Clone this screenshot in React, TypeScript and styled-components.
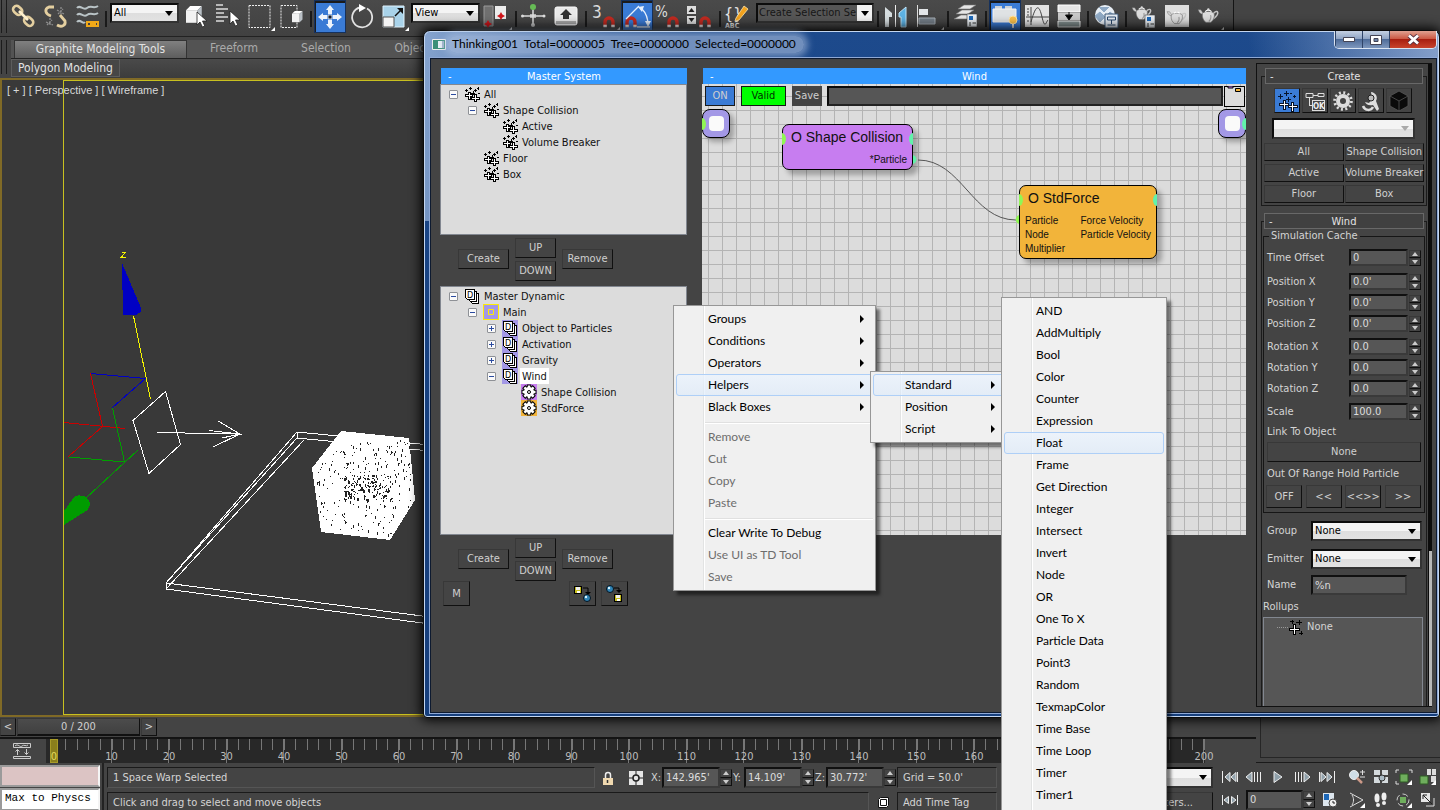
import React from "react";
import styled, { createGlobalStyle, css } from "styled-components";

const UI = `"DejaVu Sans Condensed", Tahoma, "Noto Sans", sans-serif`;
const MENU = `Lato, "Segoe UI", "Noto Sans", sans-serif`;
const NODE = `"Liberation Sans", Arial, sans-serif`;

const Global = createGlobalStyle`
  *, *::before, *::after { box-sizing: border-box; }
  body { margin: 0; background: #444; overflow: hidden; font: 11px/14px ${UI}; color: #d4d4d4; }
  button, input, select { font: inherit; color: inherit; margin: 0; padding: 0; border-radius: 0; min-width: 0; }
  svg { display: block; flex: none; }
`;

const Shell = styled.div`
  position: relative;
  display: flex;
  flex-direction: column;
  min-height: 100vh;
  overflow: hidden;
  background: #444;
`;

/* ---------- shared controls ---------- */

const bevel = css`
  border: 1px solid;
  border-color: #383838 #101010 #101010 #383838;
`;

const PushButton = styled.button<{ $w?: number; $h?: number }>`
  ${bevel}
  width: ${(p) => (p.$w ? `${p.$w}px` : "auto")};
  height: ${(p) => p.$h ?? 20}px;
  background: #444;
  color: #d0d0d0;
  display: flex;
  align-items: center;
  justify-content: center;
  white-space: nowrap;
`;

const TextField = styled.input<{ $w?: number; $h?: number }>`
  width: ${(p) => (p.$w ? `${p.$w}px` : "100%")};
  height: ${(p) => p.$h ?? 17}px;
  padding: 0 2px;
  background: #565656;
  border: 2px solid;
  border-color: #101010 #3a3a3a #3a3a3a #101010;
  color: #dcdcdc;
`;

const ComboFrame = styled.span<{ $w?: number; $h: number }>`
  display: grid;
  align-items: center;
  flex: 0 1 auto;
  min-width: 0;
  width: ${(p) => (p.$w ? `${p.$w}px` : "100%")};
  height: ${(p) => p.$h}px;
  border: 2px solid;
  border-color: #0c0c0c #333 #333 #0c0c0c;
  background: linear-gradient(#f4f4f4 50%, #dedede 52%, #e2e2e2);
  > * { grid-area: 1 / 1; }
  > svg { justify-self: end; margin-right: 4px; pointer-events: none; }
`;

const ComboSelect = styled.select`
  appearance: none;
  width: 100%;
  height: 100%;
  padding-left: 2px;
  border: 0;
  background: transparent;
  color: #000;
`;

function Combo({ label, options, w, h, muted }: { label: string; options: string[]; w?: number; h: number; muted?: boolean }) {
  return (
    <ComboFrame $w={w} $h={h}>
      <ComboSelect aria-label={label}>
        {options.map((o) => <option key={o}>{o}</option>)}
      </ComboSelect>
      <svg width="8" height="5"><path d="M0 0h8L4 5z" fill={muted ? "#aaa" : "#000"} /></svg>
    </ComboFrame>
  );
}

const Arrows = styled.span<{ $h: number }>`
  display: grid;
  grid-template-rows: 1fr 1fr;
  width: 12px;
  height: ${(p) => p.$h}px;
  flex: none;
`;

const ArrowButton = styled.button`
  ${bevel}
  background: #444;
  display: flex;
  align-items: center;
  justify-content: center;
`;

function SpinArrows({ h, name }: { h: number; name: string }) {
  return (
    <Arrows $h={h}>
      <ArrowButton aria-label={`${name} up`}><svg width="6" height="4"><path d="M0 4h6L3 0z" fill="#ccc" /></svg></ArrowButton>
      <ArrowButton aria-label={`${name} down`}><svg width="6" height="4"><path d="M0 0h6L3 4z" fill="#ccc" /></svg></ArrowButton>
    </Arrows>
  );
}

/* ---------- main toolbar ---------- */

const Toolbar = styled.header`
  display: flex;
  width: max-content;
  height: 36px;
  padding-left: 1px;
  padding-right: 8px;
  background: linear-gradient(#4a4a4a, #414141);
  border-right: 1px solid #151515;
`;

const Grip = styled.span<{ $h: number }>`
  width: 6px;
  height: ${(p) => p.$h}px;
  flex: none;
  border: solid #1c1c1c;
  border-width: 0 1px;
`;

const Tool = styled.button<{ $on?: boolean }>`
  width: 32px;
  height: 33px;
  padding: 0;
  border: 0;
  background: none;
  ${(p) => p.$on && css`
    background: #3a7bd5;
    box-shadow: inset 0 0 0 1px #16315c, inset 1px 2px 0 1px #1b1b1b;
  `}
`;

const ToolSep = styled.span`
  width: 2px;
  height: 16px;
  margin: 11px 2px 0;
  background: #1a1a1a;
  flex: none;
`;

const ToolCombo = styled.div<{ $w: number }>`
  width: ${(p) => p.$w}px;
  margin: 3px 1px 0;
`;

const NameSet = styled.div`
  display: flex;
  height: 20px;
  border: 2px solid;
  border-color: #0c0c0c #333 #333 #0c0c0c;
  background: #f2f2f2;
  > input { flex: 1; border: 0; background: #565656; color: #161616; padding-left: 1px; }
  > button { width: 15px; border: 0; background: none; padding: 0 0 0 4px; }
`;

const Magnet = () => (
  <g fill="none">
    <path d="M16 27v-5a4 4 0 0 1 8 0v5" stroke="#c22a20" strokeWidth="3.4" />
    <path d="M14.4 26h3.4M22.3 26h3.4" stroke="#eee" strokeWidth="2.4" />
  </g>
);
const Cursor = ({ x, y }: { x: number; y: number }) => (
  <path transform={`translate(${x} ${y})`} d="M0 0v13l3-3 2.4 5 2.4-1-2.3-5H10z" fill="#fff" stroke="#222" strokeWidth=".8" />
);
const Cube = ({ x, y, s }: { x: number; y: number; s: number }) => (
  <g transform={`translate(${x} ${y}) scale(${s})`}>
    <path d="M0 4h11v12H0z" fill="#f2f2f2" /><path d="M0 4l4-4h11l-4 4z" fill="#fff" /><path d="M11 4l4-4v12l-4 4z" fill="#b9c0c6" />
  </g>
);
const Teapot = ({ x, y, s }: { x: number; y: number; s: number }) => (
  <g transform={`translate(${x} ${y}) scale(${s})`}>
    <path d="M5 7C1 6 1 3 0 2l3 0c2 2 2 4 4 5" fill="#cfcfcf" stroke="#666" strokeWidth=".5" />
    <path d="M17 6c5-5 8 0 0 6" fill="none" stroke="#c4c4c4" strokeWidth="1.7" />
    <path d="M5 6c2-3 11-3 13 0 1 5-2 9-4 10H9C7 15 4 11 5 6z" fill="#dcdcdc" stroke="#666" strokeWidth=".7" />
    <path d="M8 4c2-2 5-2 7 0" fill="none" stroke="#fff" strokeWidth="1.4" /><circle cx="11.5" cy="1.6" r="1.3" fill="#ddd" />
    <path d="M14 8c1 3 0 5-2 7" fill="none" stroke="#999" strokeWidth="1.2" />
  </g>
);
const Corner = () => <path d="M31 27v4h-4z" fill="#fff" />;
const Diamond = ({ x, y }: { x: number; y: number }) => <path transform={`translate(${x} ${y})`} d="M0-4l1.4 2.6L4 0 1.4 1.4 0 4l-1.4-2.6L-4 0l2.6-1.4z" fill="#d2161b" />;
const Card = ({ x, y }: { x: number; y: number }) => (
  <g transform={`translate(${x} ${y})`}>
    <path d="M0 0h10v13H0z" fill="#e8edf2" stroke="#444" strokeWidth=".6" /><path d="M2 2h4v4H2z" fill="#1d68b8" /><path d="M2 9h2M5.500 9H9M2 11h2" stroke="#333" />
  </g>
);

const glyphs: Record<string, React.ReactNode> = {
  link: (
    <g fill="none" stroke="#e4cfa0" strokeWidth="2.600">
      <rect x="6" y="7" width="10" height="7" rx="3.500" transform="rotate(42 11 10)" />
      <rect x="17" y="18" width="10" height="7" rx="3.500" transform="rotate(42 22 21)" />
      <path d="M12 11l9 9" stroke="#fff0cc" />
    </g>
  ),
  unlink: (
    <g fill="none" stroke="#e4cfa0" strokeWidth="2.800">
      <path d="M12 16c-6-2-7-7-2-9l5 0M18 25c5 3 9 0 8-4l-5-6" />
      <path d="M18 10l7 4M19 14l5-5M22 7v7M7 22l7 3M8 25l5-5M11 18v7" stroke="#8e8e8e" strokeWidth="1.300" strokeDasharray="2 1" />
    </g>
  ),
  waves: (
    <g fill="none" stroke="#b9c3c6" strokeWidth="2">
      <path d="M6 8c3-4 6 3 10 0s7 1 11-2M6 15c3-4 6 3 10 0s7 1 11-2M6 22c3-4 6 3 8 0" />
      <path d="M16 22h5v4h-5zM22 22h5v4h-5zM19 24h6" stroke="#f0a818" />
    </g>
  ),
  pick: <g><Cube x={6} y={6} s={1.05} /><Cursor x={17} y={12} /></g>,
  byName: <g><path d="M4 5h7M4 9h12M4 13h8M4 17h12M4 21h8" stroke="#ddd" strokeWidth="1.500" /><Cursor x={18} y={11} /></g>,
  region: <g><rect x="5" y="5.500" width="21" height="22" fill="none" stroke="#eee" strokeDasharray="2 1" /><Corner /></g>,
  crossing: <g><rect x="5" y="5.500" width="16" height="22" fill="none" stroke="#eee" strokeDasharray="2 1" /><Cube x={16} y={11} s={0.7} /></g>,
  move: (
    <g fill="#eef4fb">
      <path d="M16 5l4 5h-2v4h-4v-4h-2zM16 29l4-5h-2v-4h-4v4h-2zM4 17l5-4v2h4v4H9v2zM28 17l-5-4v2h-4v4h4v2z" />
      <path d="M14 15h4v4h-4z" fill="#0e1c33" stroke="#fff" strokeWidth=".8" />
    </g>
  ),
  rotate: <g><path d="M14 7.500a10 10 0 1 0 7 1" fill="none" stroke="#e2e2e2" strokeWidth="1.800" /><path d="M13 4l7 4-7 4z" fill="#fff" /></g>,
  scale: (
    <g>
      <path d="M5 6h21v21H5z" fill="#a9d3ea" stroke="#dff1fb" /><path d="M5 17h11v10H5z" fill="#f4f4f4" stroke="#555" />
      <path d="M17 16l7-7" stroke="#111" strokeWidth="1.500" /><path d="M25 8v6l-6-6z" fill="#111" /><Corner />
    </g>
  ),
  pivot: <g><path d="M3 6h9v20H3z" fill="#707070" stroke="#999" /><path d="M14 6h11v13H14z" fill="#ececec" /><Diamond x={20} y={16} /><Diamond x={7} y={24} /><Corner /></g>,
  manip: <g><path d="M3 16h22M14 7v18" stroke="#ddd" strokeWidth="1.500" /><circle cx="14" cy="7" r="3" fill="#66bb55" /><circle cx="14" cy="25" r="2" fill="#ccc" /><circle cx="3.500" cy="16" r="1.500" fill="#ddd" /><circle cx="25" cy="16" r="1.500" fill="#ddd" /><path d="M11 14h6v4h-6z" fill="#ddd" opacity=".7" /></g>,
  keys: <g><rect x="4" y="7" width="22" height="18" rx="2" fill="#e9e9e9" stroke="#fafafa" /><path d="M5 21h20v3H5z" fill="#aaa" /><path d="M15 9l6 6h-3v4h-6v-4H9z" fill="#333" /></g>,
  snap3: <g><text x="3" y="18" fontSize="17" fill="#ddd">3</text><Magnet /><Corner /></g>,
  angle: <g><g transform="translate(-10 0)"><Magnet /></g><path d="M5 19L18 6M16 27h13M21 9c4 4 6 10 6 16" fill="none" stroke="#e7f1fd" strokeWidth="1.300" /><path d="M17 7l6-1-2 6zM24 21h6l-3 6z" fill="#e7f1fd" /></g>,
  percent: <g><text x="2" y="17" fontSize="15" fill="#ddd">%</text><Magnet /></g>,
  spin: <g><path d="M2 6h9v8H2zM2 16h9v8H2z" fill="#ddd" /><path d="M3.500 12h6L6.500 8zM3.500 18h6L6.500 22z" fill="#222" /><Magnet /></g>,
  sets: <g><text x="1" y="19" fontSize="16" fill="#e5e5e5">{"{}"}</text><text x="2" y="28" fontSize="7" fontWeight="bold" fill="#eee">ABC</text><path d="M13 18l8-12 4 3-9 11-4 1z" fill="#f2a21d" stroke="#fbe3a9" strokeWidth=".8" /></g>,
  mirror: <g><path d="M4 7l7 6v4H8v10H4z" fill="#d6dde0" /><path d="M25 7l-7 6v4h2v10h5z" fill="#5db2e4" stroke="#bfe3f7" /><path d="M14.500 5v22" stroke="#eee" /></g>,
  align: <g><path d="M4.500 5v22" stroke="#ddd" /><path d="M6 9h9v6H6z" fill="#e3e6e8" /><path d="M6 18h16v6H6z" fill="#737d87" stroke="#a7afb6" /><Corner /></g>,
  layers: <g><path d="M3 19l7-4h12l-6 4zM5 14l6-4h12l-6 4zM7 9l6-4h12l-6 4z" fill="#e6e6e6" stroke="#777" strokeWidth=".6" /><Card x={16} y={14} /></g>,
  ribbon: <g><path d="M6 6h7v3H6zM16 6h7v3h-7z" fill="#cfd3d6" /><path d="M4 9h23v13H4z" fill="#dfe2e4" stroke="#f4f4f4" /><circle cx="24" cy="20" r="4" fill="#fbc04b" stroke="#ffe6a8" /><path d="M23 24h2v4h-2z" fill="#eee" /></g>,
  curve: <g><path d="M4 5h24v22H4z" fill="#e2e2e2" /><path d="M10 7v18M5 17h23M6 9h2M6 12h2M6 15h2M6 21h2" stroke="#444" /><path d="M10 22c5-18 8-18 11-5s4 5 6 3" fill="none" stroke="#444" /></g>,
  schematic: <g><path d="M5 5h22v7H5z" fill="#e6e6e6" stroke="#fff" /><path d="M5 21h22v6H5z" fill="#7f8b8b" stroke="#eee" /><path d="M5 13h22v7H5z" fill="#c9c9c9" /><path d="M16 12v4M12.500 15h7L16 20z" stroke="#111" /></g>,
  material: <g><circle cx="14" cy="15" r="10" fill="#e7eef5" /><path d="M8 7l5 5 5-5M4 16l5-4 5 5-5 5zM14 17l5-5 5 4M14 17l0 8" fill="#8fa9c4" stroke="#8fa9c4" /><path d="M14 14h13v14H14z" fill="#e3eaf2" stroke="#3c5878" /><path d="M16.500 17h8v3h-8zM16.500 25h8M20.500 20v4" fill="none" stroke="#27466b" /></g>,
  renderSetup: <g><Teapot x={3} y={6} s={0.85} /><Card x={16} y={15} /></g>,
  frame: <g><path d="M4 5h24v22H4z" fill="#dedede" /><Teapot x={6} y={10} s={0.85} /></g>,
  render: <g><Teapot x={5} y={8} s={0.9} /><Corner /></g>,
};

function ToolIcon({ name, on, label }: { name: string; on?: boolean; label: string }) {
  return (
    <Tool $on={on} aria-label={label} aria-pressed={on}>
      <svg width="32" height="33">{glyphs[name]}</svg>
    </Tool>
  );
}

const MainToolbar = () => (
  <Toolbar>
    <Grip $h={33} />
    <ToolIcon name="link" label="Link" /><ToolIcon name="unlink" label="Unlink" /><ToolIcon name="waves" label="Bind to space warp" />
    <ToolSep />
    <ToolCombo $w={69}><Combo label="Selection filter" options={["All"]} h={20} /></ToolCombo>
    <ToolIcon name="pick" label="Select" /><ToolIcon name="byName" label="Select by name" />
    <ToolIcon name="region" label="Region" /><ToolIcon name="crossing" label="Window or crossing" />
    <ToolSep />
    <ToolIcon name="move" label="Move" on /><ToolIcon name="rotate" label="Rotate" /><ToolIcon name="scale" label="Scale" />
    <ToolCombo $w={69}><Combo label="Coordinate system" options={["View"]} h={20} /></ToolCombo>
    <ToolIcon name="pivot" label="Pivot" />
    <ToolSep />
    <ToolIcon name="manip" label="Manipulate" /><ToolIcon name="keys" label="Keyboard override" />
    <ToolSep />
    <ToolIcon name="snap3" label="Snaps" /><ToolIcon name="angle" label="Angle snap" on />
    <ToolIcon name="percent" label="Percent snap" /><ToolIcon name="spin" label="Spinner snap" />
    <ToolSep />
    <ToolIcon name="sets" label="Edit named sets" />
    <ToolCombo $w={118}>
      <NameSet>
        <input aria-label="Named selection set" defaultValue="Create Selection Se" />
        <button aria-label="Open named sets"><svg width="8" height="5"><path d="M0 0h8L4 5z" /></svg></button>
      </NameSet>
    </ToolCombo>
    <ToolSep />
    <ToolIcon name="mirror" label="Mirror" /><ToolIcon name="align" label="Align" />
    <ToolSep />
    <ToolIcon name="layers" label="Layers" />
    <ToolSep />
    <ToolIcon name="ribbon" label="Toggle ribbon" on /><ToolIcon name="curve" label="Curve editor" /><ToolIcon name="schematic" label="Schematic view" />
    <ToolSep />
    <ToolIcon name="material" label="Material editor" />
    <ToolSep />
    <ToolIcon name="renderSetup" label="Render setup" /><ToolIcon name="frame" label="Rendered frame" /><ToolIcon name="render" label="Render" />
  </Toolbar>
);

/* ---------- ribbon ---------- */

const Ribbon = styled.nav`
  display: flex;
  gap: 4px;
  height: 42px;
  padding: 3px 0 0 1px;
  border-top: 1px solid #222;
  font-size: 12px;
`;
const RibbonBody = styled.div` flex: 1; `;
const TabRow = styled.div`
  display: flex;
  height: 19px;
  padding-left: 3px;
  background: #535353;
  border-bottom: 1px solid #222;
`;
const Tab = styled.button<{ $active?: boolean; $w: number }>`
  width: ${(p) => p.$w}px;
  padding-bottom: 2px;
  border: 0;
  background: none;
  color: #aaa;
  ${(p) => p.$active && css`
    background: linear-gradient(#808080, #5d5d5d);
    border: 1px solid #333;
    border-bottom: 0;
    color: #e2e2e2;
  `}
`;
const PanelRow = styled.div`
  height: 20px;
  background: linear-gradient(#4a4a4a, #3b3b3b);
`;
const PanelTab = styled.button`
  width: 109px;
  height: 18px;
  padding-bottom: 1px;
  border: 1px solid #5c5c5c;
  background: #464646;
  color: #e2e2e2;
`;

/* ---------- viewport ---------- */

const Viewport = styled.main`
  position: relative;
  flex: 1;
  border: 2px solid #806a26;
  background: #393939;
  overflow: hidden;
`;
const ViewLabel = styled.p`
  margin: 3px 0 0 5px;
  color: #d8d8d8;
  font: 11px/14px ${NODE};
`;
const SafeFrame = styled.div`
  position: absolute;
  inset: 0 0 0 61px;
  border: 1px solid #c8c020;
`;
const Scene = styled.svg`
  position: absolute;
  inset: 0;
  width: 100%;
  height: 100%;
`;

const holes = (() => {
  const out: { x: number; y: number; w: number; h: number }[] = [];
  let seed = 77;
  const rnd = () => ((seed = (seed * 16807) % 2147483647) / 2147483647);
  for (let i = 0; i < 420; i++) {
    const spread = i < 130 ? 22 : 50;
    const x = Math.round(366 + (rnd() - 0.5) * spread * 2);
    const y = Math.round(487 + (rnd() - 0.5) * spread * (i < 130 ? 1.1 : 1.9));
    const left = 314 + (y - 468) * 0.13;
    const right = 411 - Math.max(0, y - 502) * 0.6;
    if (y > 434 + (x - 341) * 0.1 && x > left && x + y > 782 && x < right && y < 528 + (x - 321) * 0.1) {
      out.push({ x, y, w: i < 40 ? 2 : 1, h: i % 5 === 0 ? 3 : i % 3 === 0 ? 2 : 1 });
    }
  }
  return out;
})();

const SceneDrawing = () => (
  <Scene aria-label="Wireframe scene">
    <g transform="translate(-2 -80)" fill="none" shapeRendering="crispEdges" strokeWidth="1">
      <path d="M122 263l1 52h13l5-3v-4z" fill="#0000c4" />
      <path d="M133.500 316l17 83" stroke="#f5f500" />
      <path d="M121.500 252h4l-4 5h4" stroke="#f5f500" />
      <path d="M90.500 373.500l55 5-33 29" stroke="#0000c4" />
      <path d="M90.500 373.500l12 53-34 30M64 422.500l61 6" stroke="#cc0000" />
      <path d="M112.500 408l12 54-56-5M138 450l-52 48" stroke="#00a000" />
      <path d="M64 525l22-14c4-3 6-8 1-13-3-3-8-3-12-2l-11 15z" fill="#009c00" />
      <path d="M165.500 391.500l15 53-31.500 29-16-53z" stroke="#fff" />
      <path d="M157 432.500l83 1.500-22-13M240 434l-27 13M209 430.500l31 3.500-18 4" stroke="#fff" />
      <path d="M430 451l-133-13-131 145v6l264 35M430 445l-133-13v6M297 432L166 583l264 34M166 589L304 440" stroke="#fff" />
      <path d="M341 431l68 7 6 62-25 40-69-8-9-64z" fill="#fff" />
      <g fill="#222">{holes.map((h, i) => <rect key={i} x={h.x} y={h.y} width={h.w} height={h.h} />)}</g>
    </g>
  </Scene>
);

/* ---------- time slider and track ---------- */

const Lower = styled.section`
  display: grid;
  grid-template-columns: 1fr 184px;
`;
const SliderRow = styled.div`
  display: flex;
  height: 20px;
  padding: 1px 0 1px;
  > button:nth-child(2) { margin: 0 1px; background: linear-gradient(#4c4c4c, #404040); border-bottom-width: 2px; }
`;
const TrackRow = styled.div`
  display: flex;
  height: 26px;
  border-top: 2px solid #141414;
`;
const TrackIcon = styled.span`
  width: 46px;
  padding: 4px 0 0 13px;
`;
const Track = styled.div`
  display: flex;
  flex: 1;
  margin-right: 51px;
  padding-left: 7px;
  background: #282828;
  color: #bdbdbd;
`;
const Decade = styled.div`
  flex: 1;
  min-width: 0;
  border-left: 1px solid #777;
  &:last-child { flex: 0 0 2px; }
`;
const Ticks = styled.div`
  height: 11px;
  background: repeating-linear-gradient(90deg, #777 0 1px, transparent 1px 20%);
`;
const FrameNo = styled.span<{ $now?: boolean }>`
  display: block;
  width: 30px;
  margin-left: -15px;
  line-height: 13px;
  text-align: center;
  ${(p) => p.$now && css`
    width: 8px;
    height: 24px;
    margin: -11px 0 0 -4px;
    padding-top: 11px;
    background: #8a7f1c;
    color: #e0d85a;
    box-shadow: inset 0 0 0 1px #a89b28;
  `}
`;
const SidePanelTail = styled.div`
  height: 41px;
  margin-left: 4px;
  border: 1px solid #262626;
  border-width: 0 0 1px 1px;
`;
const SideCell = styled.div` border-bottom: 1px solid #1a1a1a; `;

/* ---------- status bar ---------- */

const Status = styled.footer`
  display: grid;
  grid-template-columns: 100px 1fr 227px;
  height: 47px;
`;
const Listener = styled.div`
  display: grid;
  grid-template-rows: 22px 23px;
  row-gap: 1px;
  padding-top: 2px;
`;
const ListenerInput = styled.input<{ $pink?: boolean }>`
  width: 100%;
  border: 2px solid #9a9a9a;
  border-right-color: #f4f4f4;
  background: ${(p) => (p.$pink ? "#dcc4c4" : "#fff")};
  color: #000;
  padding: 0 3px 3px;
  font: 11px "Liberation Mono", monospace;
`;
const StatusRows = styled.div`
  display: flex;
  flex-direction: column;
  gap: 4px;
  padding: 4px 0 0 3px;
  margin-left: 2px;
  border-left: 2px solid #222;
`;
const StatusRow = styled.div`
  display: flex;
  height: 21px;
  align-items: center;
`;
const Well = styled.span<{ $w?: number }>`
  display: flex;
  align-items: center;
  flex: ${(p) => (p.$w ? `0 0 ${p.$w}px` : "1")};
  height: 21px;
  padding-left: 5px;
  border: 1px solid;
  border-color: #1a1a1a #555 #555 #1a1a1a;
`;
const IconCell = styled.button<{ $w: number }>`
  width: ${(p) => p.$w}px;
  height: 21px;
  display: flex;
  flex: none;
  align-items: center;
  justify-content: center;
  border: 0;
  background: none;
`;
const Coord = styled.label`
  display: flex;
  align-items: center;
  width: 82px;
  flex: none;
  > span:first-child { width: 11px; }
`;
const Pad = styled.span<{ $w: number }>` flex: 0 0 ${(p) => p.$w}px; `;
const PlayRows = styled.div`
  display: flex;
  flex-direction: column;
  gap: 2px;
  padding: 3px 0 0 5px;
`;

const Bars = ({ d }: { d: string }) => (
  <svg width="18" height="14"><path d={d} fill="#8fa0aa" stroke="#eee" strokeWidth="1" /></svg>
);

/* ---------- floating window ---------- */

const FloatWindow = styled.section`
  position: absolute;
  top: 30px;
  right: 0;
  bottom: 92px;
  left: 423px;
  display: flex;
  flex-direction: column;
  padding: 0 2px 4px 6px;
  border: 1px solid #0b0b0b;
  border-radius: 7px 7px 4px 4px;
  background:
    linear-gradient(100deg, rgba(170, 195, 230, .75), rgba(120, 155, 205, .2) 180px, transparent 260px) 0 0 / 500px 190px no-repeat,
    linear-gradient(260deg, rgba(170, 190, 225, .75), transparent 190px) 100% 0 / 300px 190px no-repeat,
    linear-gradient(#1d4a8c, #163f7d 60%);
  box-shadow: inset 0 0 0 1px #c3d6f0, 0 0 12px 2px #000;
`;
const TitleBar = styled.div`
  display: flex;
  align-items: center;
  flex: none;
  height: 27px;
  padding-left: 2px;
  gap: 2px;
`;
const TitleText = styled.h1`
  margin: 0;
  padding: 1px 8px 2px 4px;
  border-radius: 9px;
  background: rgba(170, 190, 222, .6);
  box-shadow: 0 0 7px 4px rgba(170, 190, 222, .6);
  color: #000;
  font: 12px/14px ${MENU};
  white-space: pre;
`;
const Caption = styled.div`
  display: flex;
  align-self: flex-start;
  margin-left: auto;
  border: 1px solid #dbe5f3;
  border-top: 0;
  border-radius: 0 0 5px 5px;
  overflow: hidden;
`;
const CaptionButton = styled.button<{ $close?: boolean }>`
  width: ${(p) => (p.$close ? 47 : 27)}px;
  height: 17px;
  display: flex;
  align-items: center;
  justify-content: center;
  border: 0;
  border-left: 1px solid #2f4468;
  background: ${(p) => (p.$close ? "linear-gradient(#e0a191, #cc5a45 45%, #a81f10 50%, #c8432c)" : "linear-gradient(#c4d0e2, #8fa4c4 45%, #4f6c99 50%, #7e97bd)")};
`;
const Client = styled.div`
  display: flex;
  flex: 1;
  padding: 4px 4px 5px 9px;
  border: 1px solid #0d1a30;
  outline: 1px solid #8fa9d6;
  background: #444;
`;
const LeftCol = styled.div`
  flex: 0 0 247px;
  padding-top: 5px;
`;
const MidCol = styled.div`
  flex: 1;
  margin: 0 10px 0 15px;
  padding-top: 5px;
  min-width: 0;
`;
const BlueHead = styled.h2`
  position: relative;
  height: 16px;
  margin: 0 0 0 1px;
  background: #3399ff;
  color: #fff;
  font: 11px/18px ${UI};
  text-align: center;
  &::before { content: "-"; position: absolute; left: 7px; }
`;
const TreeBox = styled.ul<{ $h: number }>`
  height: ${(p) => p.$h}px;
  margin: 0;
  padding: 1px 0 0 8px;
  border: 1px solid #828790;
  background: #dcdcdc;
  color: #111;
  list-style: none;
`;
const TreeRow = styled.li<{ $level: number }>`
  display: flex;
  align-items: center;
  height: 16px;
  padding-left: ${(p) => p.$level * 19}px;
`;
const Expander = styled.button`
  width: 9px;
  height: 9px;
  border: 1px solid #8e9196;
  border-radius: 1px;
  background: #fafafa;
  display: flex;
  align-items: center;
  justify-content: center;
`;
const NoExpander = styled.span` width: 9px; `;
const NodeIcon = styled.span<{ $tone?: string }>`
  width: 16px;
  height: 16px;
  margin: 0 2px 0 6px;
  background: ${(p) => p.$tone ?? "transparent"};
`;
const NodeText = styled.span<{ $sel?: boolean }>`
  height: 16px;
  padding: 0 2px;
  line-height: 18px;
  white-space: nowrap;
  background: ${(p) => (p.$sel ? "#fff" : "transparent")};
`;

const ParticleIcon = () => (
  <svg width="16" height="16" shapeRendering="crispEdges" fill="none">
    <path d="M5 2.500h3M6.500 1v3M10 4.500h3M11.500 3v3M1 4.500h3M2.500 3v3M13 2.500h2M14 1v3M7 7.500h4M9.500 5v4M14 7.500h2" stroke="#000" />
    <path d="M1 9.500h8M5 6v8M7 12.500h9M11.500 8v8" stroke="#000" strokeWidth="3" />
    <path d="M2 9.500h6M5 7v6M8 12.500h7M11.500 9v6" stroke="#fff" />
  </svg>
);
const StackIcon = () => (
  <svg width="16" height="16" fill="#fff" stroke="#000" shapeRendering="crispEdges">
    <path d="M6.500 5.500h8v10h-6l-2-2z" /><path d="M4.500 3.500h8v10h-6l-2-2z" /><path d="M1.500 1.500h9v10h-7l-2-2z" />
    <text x="3" y="10" fontSize="9" fontFamily="DejaVu Sans Condensed" stroke="none" fill="#000">D</text>
  </svg>
);
const TEETH = [0, 45, 90, 135];
const GearIcon = () => (
  <svg width="16" height="16">
    <g transform="translate(8 8)">
      {TEETH.map((a) => <path key={a} transform={`rotate(${a})`} d="M-7.500 0h15" stroke="#000" strokeWidth="4.500" />)}
      <circle r="6" />
      {TEETH.map((a) => <path key={a} transform={`rotate(${a})`} d="M-6.500 0h13" stroke="#fff" strokeWidth="2.500" />)}
      <circle r="5" fill="#fff" /><circle r="1.500" fill="none" stroke="#000" />
    </g>
  </svg>
);
const MainIcon = () => (
  <svg width="16" height="16" fill="none" stroke="#ffee00"><path d="M.5.5h15v15H.5zM5.500 5.500h5v5h-5z" /></svg>
);

type Kind = "particle" | "stack" | "gear" | "main";
type Entry = { level: number; text: string; kind: Kind; tone?: string; open?: boolean; sel?: boolean };
const pictures: Record<Kind, React.ReactNode> = { particle: <ParticleIcon />, stack: <StackIcon />, gear: <GearIcon />, main: <MainIcon /> };

const systemTree: Entry[] = [
  { level: 0, text: "All", kind: "particle", open: true },
  { level: 1, text: "Shape Collision", kind: "particle", open: true },
  { level: 2, text: "Active", kind: "particle" },
  { level: 2, text: "Volume Breaker", kind: "particle" },
  { level: 1, text: "Floor", kind: "particle" },
  { level: 1, text: "Box", kind: "particle" },
];
const lilac = "#a398e6";
const dynamicTree: Entry[] = [
  { level: 0, text: "Master Dynamic", kind: "stack", open: true },
  { level: 1, text: "Main", kind: "main", tone: lilac, open: true },
  { level: 2, text: "Object to Particles", kind: "stack", tone: lilac, open: false },
  { level: 2, text: "Activation", kind: "stack", tone: lilac, open: false },
  { level: 2, text: "Gravity", kind: "stack", tone: lilac, open: false },
  { level: 2, text: "Wind", kind: "stack", tone: lilac, open: true, sel: true },
  { level: 3, text: "Shape Collision", kind: "gear", tone: "#c77df0" },
  { level: 3, text: "StdForce", kind: "gear", tone: "#f2b43a" },
];

function Tree({ rows, h }: { rows: Entry[]; h: number }) {
  return (
    <TreeBox $h={h}>
      {rows.map((r, i) => (
        <TreeRow key={i} $level={r.level}>
          {r.open === undefined ? <NoExpander /> : (
            <Expander aria-label={`Toggle ${r.text}`}>
              <svg width="5" height="5" stroke="#2b4ba0"><path d={r.open ? "M0 2.500h5" : "M0 2.500h5M2.500 0v5"} /></svg>
            </Expander>
          )}
          <NodeIcon $tone={r.tone}>{pictures[r.kind]}</NodeIcon>
          <NodeText $sel={r.sel}>{r.text}</NodeText>
        </TreeRow>
      ))}
    </TreeBox>
  );
}

const TreeButtons = styled.div`
  display: flex;
  align-items: center;
  gap: 6px;
  height: 51px;
  padding: 0 0 3px 18px;
`;
const UpDown = styled.div` display: grid; gap: 3px; `;
const ManageButtons = () => (
  <TreeButtons>
    <PushButton $w={51}>Create</PushButton>
    <UpDown><PushButton $w={41}>UP</PushButton><PushButton $w={41}>DOWN</PushButton></UpDown>
    <PushButton $w={51}>Remove</PushButton>
  </TreeButtons>
);
const ToolsLine = styled.div`
  display: flex;
  gap: 5px;
  padding-left: 3px;
  margin-top: -5px;
  > :nth-child(2) { margin-left: 94px; }
`;
const Disk = () => (
  <g shapeRendering="crispEdges"><path d="M0 0h8v8H0z" fill="#000" /><path d="M1 1h6v6H1z" fill="#c8c020" /><path d="M2 1h4v3H2z" fill="#eee" /><path d="M3 5h3v2H3z" fill="#fff" /></g>
);
const Globe = () => <g><circle r="3.500" fill="#2e83b5" stroke="#04121d" /><circle cx="-1" cy="-1" r="1.200" fill="#d9f4ff" /></g>;

/* ---------- node canvas ---------- */

const Canvas = styled.div`
  position: relative;
  height: 451px;
  overflow: hidden;
  background:
    linear-gradient(#b4b4b4 1px, transparent 1px) 0 12px / 14px 14px,
    linear-gradient(90deg, #b4b4b4 1px, transparent 1px) 6px 0 / 14px 14px,
    #dcdcdc;
`;
const CanvasBar = styled.div`
  position: relative;
  display: flex;
  align-items: flex-start;
  padding: 2px 1px 0 3px;
  > input { flex: 1; background: #565656; height: 20px; border: 2px solid; border-color: #0a0a0a #222 #222 #0a0a0a; }
`;
const CanvasButton = styled.button<{ $w: number; $tone?: "on" | "valid"; $mr: number }>`
  width: ${(p) => p.$w}px;
  height: 20px;
  margin-right: ${(p) => p.$mr}px;
  border: 0;
  background: #444;
  color: #cfcfcf;
  ${(p) => p.$tone === "on" && css` background: #3a7bd5; border: 1px solid #1a1a1a; `}
  ${(p) => p.$tone === "valid" && css` background: #00ff00; border: 1px solid #151515; color: #003000; `}
`;
const MiniMap = styled.button`
  width: 21px;
  height: 21px;
  margin-left: 1px;
  border: 1px solid #000;
  background: #dcdcdc;
  > svg { margin-top: -2px; }
`;
const Wire = styled.svg`
  position: absolute;
  inset: 0;
  width: 100%;
  height: 100%;
`;
const EndNode = styled.div<{ $right?: boolean }>`
  position: absolute;
  top: 25px;
  ${(p) => (p.$right ? "right: 0;" : "left: 0;")}
  width: 28px;
  height: 29px;
  display: grid;
  place-items: center;
  border: 1px solid #000;
  border-radius: 8px;
  background: #a398e6;
  box-shadow: 4px 4px 5px rgba(0, 0, 0, .28);
  &::before { content: ""; width: 15px; height: 15px; border-radius: 4px; background: #fafafa; }
`;
const Port = styled.i<{ $side: "left" | "right"; $y: number }>`
  position: absolute;
  top: ${(p) => p.$y}px;
  ${(p) => p.$side}: -1px;
  width: 4px;
  height: 12px;
  background: ${(p) => (p.$side === "left" ? "#90f755" : "#62f2aa")};
  border-radius: ${(p) => (p.$side === "left" ? "0 4px 4px 0 / 0 6px 6px 0" : "4px 0 0 4px / 6px 0 0 6px")};
`;
const GraphNode = styled.article<{ $x: number; $y: number; $w: number; $h: number; $tone: string }>`
  position: absolute;
  left: ${(p) => p.$x}px;
  top: ${(p) => p.$y}px;
  width: ${(p) => p.$w}px;
  height: ${(p) => p.$h}px;
  border: 1px solid #000;
  border-radius: 7px;
  background: ${(p) => p.$tone};
  box-shadow: 5px 5px 5px rgba(0, 0, 0, .28);
  color: #111;
  font: 10px/14px ${NODE};
`;
const NodeTitle = styled.h3`
  margin: 3px 8px 7px;
  font: 14px/18px ${NODE};
  white-space: nowrap;
`;
const Pins = styled.div<{ $end?: boolean }>`
  display: flex;
  justify-content: ${(p) => (p.$end ? "flex-end" : "space-between")};
  padding: 0 5px;
`;
const PinList = styled.ul` margin: 0; padding: 0; list-style: none; white-space: nowrap; `;

/* ---------- rollout panel ---------- */

const SidePanel = styled.aside`
  display: flex;
  flex: 0 0 176px;
  border: 1px solid #111;
  border-right: 0;
`;
const RollColumn = styled.div`
  display: flex;
  flex-direction: column;
  flex: 1;
  min-width: 0;
  padding: 12px 1px 0 4px;
`;
const ScrollTrack = styled.div`
  width: 4px;
  background: #0c0c0c;
  display: flex;
  flex-direction: column;
  justify-content: flex-end;
  &::after { content: ""; height: 155px; margin-left: 1px; background: #b8b8b8; }
`;
const Rollout = styled.section<{ $fill?: boolean }>`
  display: flex;
  flex-direction: column;
  border: 1px solid #1b1b1b;
  padding: 0 2px 2px;
  ${(p) => p.$fill && css` flex: 1; margin-top: 15px; border-bottom: 0; padding: 0 1px; `}
`;
const RollHead = styled.h2`
  position: relative;
  flex: none;
  height: 16px;
  margin: -9px 1px 0;
  border: 1px solid #686868;
  background: #404040;
  color: #e4e4e4;
  font: 11px/16px ${UI};
  text-align: center;
  &::before { content: "-"; position: absolute; left: 4px; }
`;
const TypeRow = styled.div`
  display: flex;
  gap: 2px;
  padding: 4px 0 5px 10px;
`;
const TypeButton = styled.button<{ $on?: boolean }>`
  ${bevel}
  width: 26px;
  height: 25px;
  background: ${(p) => (p.$on ? "#3a7bd5" : "#444")};
  display: flex;
  align-items: center;
  justify-content: center;
`;
const ComboSlot = styled.div` padding: 0 9px 4px 8px; `;
const PickGrid = styled.div`
  display: grid;
  grid-template-columns: 1fr 1fr;
  gap: 3px 1px;
`;
const Cache = styled.fieldset`
  margin: 0 0 8px;
  padding: 4px 3px 4px 3px;
  border: 1px solid #161616;
  min-width: 0;
  > legend { padding: 0 2px; margin-left: 2px; line-height: 14px; }
`;
const SpinRow = styled.label<{ $gap: number }>`
  display: flex;
  align-items: center;
  height: 21px;
  margin-top: ${(p) => p.$gap}px;
  > span:first-child { flex: 1; }
  > input { margin-right: 1px; }
`;
const Note = styled.p<{ $h: number }>`
  margin: 0;
  line-height: ${(p) => p.$h}px;
  white-space: nowrap;
`;
const RangeRow = styled.div`
  display: flex;
  justify-content: space-between;
  margin-left: -1px;
`;
const FormRow = styled.label`
  display: flex;
  align-items: center;
  height: 20px;
  margin: 0 3px 8px 4px;
  > span:first-child { flex: 0 0 44px; }
  &:last-of-type { margin-top: -2px; margin-bottom: 2px; }
`;
const RollupTree = styled.ul`
  flex: 1;
  margin: 0 2px 0 0;
  padding: 1px 0 0 13px;
  border: 1px solid #828790;
  border-bottom: 0;
  background: #565656;
  list-style: none;
  > li { display: flex; align-items: center; height: 16px; }
  > li > svg { margin-right: 3px; }
`;

const OkIcon = () => (
  <svg width="22" height="22" fill="none" stroke="#ddd"><path d="M2 3.500h7v4H2zM14 3.500h6v3h-6zM9 5.500h5M5.500 8v8M5.500 15.500h4" /><rect x="8.500" y="10.500" width="12" height="10" /><text x="9" y="19" fontSize="8" fontWeight="bold" fill="#eee" stroke="none">OK</text></svg>
);
const PlusField = () => (
  <svg width="22" height="22" fill="none" shapeRendering="crispEdges">
    <path d="M8 3.500h5M10.500 1v5M2 6.500h5M4.500 4v5M10 9.500h5M12.500 7v5M17 6.500h3M18.500 5v3M14 3.500h2" stroke="#07142a" />
    <path d="M3 14.500h10M8.500 10v10M12 16.500h10M16.500 12v10" stroke="#07142a" strokeWidth="3" />
    <path d="M4 14.500h8M8.500 11v8M13 16.500h8M16.500 13v8" stroke="#fff" strokeWidth="1.500" />
  </svg>
);
const BigGear = () => (
  <svg width="22" height="22" fill="none"><circle cx="11" cy="11" r="5" stroke="#ddd" strokeWidth="4" /><circle cx="11" cy="11" r="8.400" stroke="#ddd" strokeWidth="2.800" strokeDasharray="2 2.400" /></svg>
);
const Wrench = () => (
  <svg width="22" height="22"><path d="M11 2a6 6 0 0 1 5 9l3 8-2 2-4-6c-5 1-7-1-8-3l4 1 3-4z" fill="#ddd" /><circle cx="11" cy="8" r="3" fill="#bbb" stroke="#222" /><path d="M3 16c2 5 8 5 10 1" fill="none" stroke="#ddd" strokeWidth="2.500" /></svg>
);
const BlackCube = () => (
  <svg width="24" height="22" stroke="#555" strokeWidth=".8"><path d="M12 1l9 5v10l-9 5-9-5V6z" fill="#0a0a0a" /><path d="M3 6l9 5 9-5M12 11v10" fill="none" /></svg>
);

type SpinGroup = { gap: number; fields: [string, string][] };
const spinGroups: SpinGroup[] = [
  { gap: 0, fields: [["Time Offset", "0"]] },
  { gap: 3, fields: [["Position X", "0.0'"], ["Position Y", "0.0'"], ["Position Z", "0.0'"]] },
  { gap: 2, fields: [["Rotation X", "0.0"], ["Rotation Y", "0.0"], ["Rotation Z", "0.0"]] },
  { gap: 2, fields: [["Scale", "100.0"]] },
];

const Parameters = () => (
  <SidePanel>
    <RollColumn>
      <Rollout>
        <RollHead>Create</RollHead>
        <TypeRow>
          <TypeButton $on aria-label="Particles"><PlusField /></TypeButton>
          <TypeButton aria-label="Rules"><OkIcon /></TypeButton>
          <TypeButton aria-label="Settings"><BigGear /></TypeButton>
          <TypeButton aria-label="Utilities"><Wrench /></TypeButton>
          <TypeButton aria-label="Black boxes"><BlackCube /></TypeButton>
        </TypeRow>
        <ComboSlot><Combo label="Category" options={[""]} h={21} muted /></ComboSlot>
        <PickGrid>
          {["All", "Shape Collision", "Active", "Volume Breaker", "Floor", "Box"].map((t) => <PushButton key={t} $h={18}>{t}</PushButton>)}
        </PickGrid>
      </Rollout>
      <Rollout $fill>
        <RollHead>Wind</RollHead>
        <Cache>
          <legend>Simulation Cache</legend>
          {spinGroups.map((g) => g.fields.map(([name, value], i) => (
            <SpinRow key={name} $gap={i === 0 ? g.gap : 0}>
              <span>{name}</span>
              <TextField $w={59} $h={17} defaultValue={value} />
              <SpinArrows h={16} name={name} />
            </SpinRow>
          )))}
          <Note $h={20}>Link To Object</Note>
          <PushButton $w={154}>None</PushButton>
          <Note $h={23}>Out Of Range Hold Particle</Note>
          <RangeRow>
            {["OFF", "<<", "<<>>", ">>"].map((t) => <PushButton key={t} $w={36} $h={23}>{t}</PushButton>)}
          </RangeRow>
        </Cache>
        <FormRow><span>Group</span><Combo label="Group" options={["None"]} h={20} /></FormRow>
        <FormRow><span>Emitter</span><Combo label="Emitter" options={["None"]} h={20} /></FormRow>
        <FormRow><span>Name</span><TextField $w={96} $h={20} defaultValue="%n" /></FormRow>
        <Note $h={20}>Rollups</Note>
        <RollupTree>
          <li>
            <svg width="27" height="16" fill="none" shapeRendering="crispEdges">
              <path d="M0 8.500h12" stroke="#999" strokeDasharray="1 1" />
              <path d="M13 2.500h4M15.500 1v4M19 3.500h6M22.500 1v5M22 14.500h4M24.500 12v4M12 10.500h11M17.500 5v11" stroke="#000" />
              <path d="M12 10.500h11M17.500 5v11" stroke="#000" strokeWidth="3" /><path d="M13 10.500h9M17.500 6v9" stroke="#fff" />
            </svg>
            None
          </li>
        </RollupTree>
      </Rollout>
    </RollColumn>
    <ScrollTrack />
  </SidePanel>
);

/* ---------- context menus ---------- */

const MenuBox = styled.ul<{ $x: number; $y: number; $w: number; $open?: boolean }>`
  position: absolute;
  left: ${(p) => p.$x}px;
  top: ${(p) => p.$y}px;
  ${(p) => p.$open && "bottom: 0;"}
  width: ${(p) => p.$w}px;
  margin: 0;
  padding: 2px;
  border: 1px solid #979797;
  ${(p) => p.$open && "border-bottom: 0;"}
  background: linear-gradient(90deg, transparent 29px, #e2e3e3 29px 30px, #fff 30px 31px, transparent 31px), #f0f0f0;
  box-shadow: 4px 4px 3px rgba(0, 0, 0, .5);
  color: #000;
  font: 12px/20px ${MENU};
  list-style: none;
`;
const MenuItem = styled.button<{ $hot?: boolean; $off?: boolean }>`
  display: flex;
  align-items: center;
  justify-content: space-between;
  width: 100%;
  height: 22px;
  padding: 0 8px 0 31px;
  border: 1px solid transparent;
  border-radius: 3px;
  background: none;
  color: ${(p) => (p.$off ? "#6d6d6d" : "#000")};
  ${(p) => p.$hot && css` border-color: #aecff7; background: linear-gradient(rgba(235, 243, 253, .8), rgba(219, 234, 251, .6)); `}
`;
const MenuRule = styled.li`
  height: 8px;
  margin-left: 29px;
  padding-top: 4px;
  &::before { content: ""; display: block; height: 2px; background: #e0e0e0; border-bottom: 1px solid #fff; }
`;

type Item = { text: string; sub?: boolean; hot?: boolean; off?: boolean } | null;
function Menu({ x, y, w, items, open }: { x: number; y: number; w: number; items: Item[]; open?: boolean }) {
  return (
    <MenuBox $x={x} $y={y} $w={w} $open={open}>
      {items.map((it, i) => it ? (
        <li key={i}>
          <MenuItem $hot={it.hot} $off={it.off}>
            {it.text}
            {it.sub && <svg width="4" height="8"><path d="M0 0l4 4-4 4z" /></svg>}
          </MenuItem>
        </li>
      ) : <MenuRule key={i} />)}
    </MenuBox>
  );
}

const rootMenu: Item[] = [
  { text: "Groups", sub: true }, { text: "Conditions", sub: true }, { text: "Operators", sub: true },
  { text: "Helpers", sub: true, hot: true }, { text: "Black Boxes", sub: true }, null,
  { text: "Remove", off: true }, { text: "Cut", off: true }, { text: "Copy", off: true }, { text: "Paste", off: true }, null,
  { text: "Clear Write To Debug" }, { text: "Use UI as TD Tool", off: true }, { text: "Save", off: true },
];
const helperMenu: Item[] = [{ text: "Standard", sub: true, hot: true }, { text: "Position", sub: true }, { text: "Script", sub: true }];
const standardMenu: Item[] = [
  "AND", "AddMultiply", "Bool", "Color", "Counter", "Expression", "Float", "Frame", "Get Direction", "Integer", "Intersect",
  "Invert", "Node", "OR", "One To X", "Particle Data", "Point3", "Random", "TexmapColor", "Time Base", "Time Loop", "Timer", "Timer1",
].map((text) => ({ text, hot: text === "Float" }));

/* ---------- assembled pieces ---------- */

const ThinkingWindow = () => (
  <FloatWindow>
    <TitleBar>
      <svg width="14" height="13"><path d="M.5 1.500h13v10H.5z" fill="#3c8f78" stroke="#eee" /><path d="M6 3h4v7H6z" fill="#e8eef4" /><path d="M10 3h2v7h-2z" fill="#9fb2c8" /></svg>
      <TitleText>{"Thinking001  Total=0000005  Tree=0000000  Selected=0000000"}</TitleText>
      <Caption>
        <CaptionButton aria-label="Minimize"><svg width="12" height="5"><path d="M.5.5h11v4H.5z" fill="#fff" stroke="#445" /></svg></CaptionButton>
        <CaptionButton aria-label="Maximize"><svg width="12" height="10"><path d="M.5.5h11v9H.5z" fill="#fff" stroke="#445" /><path d="M4 3.500h4v3H4z" fill="#6a82a8" stroke="#445" /></svg></CaptionButton>
        <CaptionButton $close aria-label="Close"><svg width="13" height="11"><path d="M2 1.500l9 8M11 1.500l-9 8" stroke="#534" strokeWidth="4.500" /><path d="M2 1.500l9 8M11 1.500l-9 8" stroke="#fff" strokeWidth="2.800" /></svg></CaptionButton>
      </Caption>
    </TitleBar>
    <Client>
      <LeftCol>
        <BlueHead>Master System</BlueHead>
        <Tree rows={systemTree} h={151} />
        <ManageButtons />
        <Tree rows={dynamicTree} h={249} />
        <ManageButtons />
        <ToolsLine>
          <PushButton $w={27} $h={25}>M</PushButton>
          <PushButton $w={27} $h={25} aria-label="Load">
            <svg width="20" height="18"><g transform="translate(1 1)"><Disk /></g><path d="M10 3h5v5" fill="none" stroke="#000" /><path d="M12 7h6l-3 3z" /><g transform="translate(14 13)"><Globe /></g></svg>
          </PushButton>
          <PushButton $w={27} $h={25} aria-label="Save to disk">
            <svg width="20" height="18"><g transform="translate(5 4)"><Globe /></g><path d="M9 3h5v3" fill="none" stroke="#000" /><path d="M11 5h6l-3 3z" /><g transform="translate(9 9)"><Disk /></g></svg>
          </PushButton>
        </ToolsLine>
      </LeftCol>
      <MidCol>
        <BlueHead>Wind</BlueHead>
        <Canvas>
          <CanvasBar>
            <CanvasButton $w={30} $mr={6} $tone="on">ON</CanvasButton>
            <CanvasButton $w={45} $mr={6} $tone="valid">Valid</CanvasButton>
            <CanvasButton $w={30} $mr={5}>Save</CanvasButton>
            <input aria-label="Comment" />
            <MiniMap aria-label="Overview">
              <svg width="19" height="19" stroke="#000"><path d="M3 0h5v2H3z" fill="#c77df0" /><path d="M10.500 2.500h5v3h-5z" fill="#f2b43a" /></svg>
            </MiniMap>
          </CanvasBar>
          <EndNode><Port $side="left" $y={8} /></EndNode>
          <EndNode $right><Port $side="right" $y={8} /></EndNode>
          <GraphNode $x={80} $y={40} $w={131} $h={46} $tone="#c77df0">
            <NodeTitle>O Shape Collision</NodeTitle>
            <Pins $end><span>*Particle</span></Pins>
            <Port $side="left" $y={8} /><Port $side="right" $y={8} />
          </GraphNode>
          <GraphNode $x={317} $y={101} $w={138} $h={74} $tone="#f2b43a">
            <NodeTitle>O StdForce</NodeTitle>
            <Pins>
              <PinList><li>Particle</li><li>Node</li><li>Multiplier</li></PinList>
              <PinList><li>Force Velocity</li><li>Particle Velocity</li></PinList>
            </Pins>
            <Port $side="left" $y={8} /><Port $side="right" $y={8} />
          </GraphNode>
          <Wire fill="none">
            <path d="M216 76C260 76 270 136 314 136" stroke="#555" />
            <path d="M211 71a6 5 0 0 1 0 9z" fill="#62f2aa" /><path d="M317 131a6 5 0 0 0 0 9z" fill="#90f755" />
          </Wire>
        </Canvas>
      </MidCol>
      <Parameters />
    </Client>
  </FloatWindow>
);

const ZoomGlass = () => <svg width="18" height="16" fill="none"><circle cx="6" cy="6" r="4.500" fill="#cfdde6" stroke="#eee" /><path d="M9 9l5 5" stroke="#c98" strokeWidth="2.500" /><path d="M12 3h5M14.500 1v5M12 8h5" stroke="#ddd" /></svg>;
const FourView = () => <svg width="16" height="16"><path d="M1 1h6v5H1zM9 1h6v5H9zM1 8h6v6H1zM9 8h6v6H9z" fill="#d4dadd" /><circle cx="9" cy="9" r="3" fill="#a9bac4" stroke="#333" /></svg>;
const GreenFrame = () => <svg width="18" height="16"><path d="M1 4V1h3M14 1h3v3M1 12v3h3" fill="none" stroke="#ddd" /><path d="M5 5h8v8H5z" fill="#6fae5d" stroke="#2e5a24" /><path d="M17 11v5h-5z" fill="#fff" /></svg>;
const GreenGrid = () => <svg width="18" height="16"><path d="M8 0h4v6H8zM13 0h4v6h-4zM12 7h5v6h-5z" fill="#ddd" /><path d="M1 7h8v8H1z" fill="#6fae5d" stroke="#2e5a24" /><path d="M17 11v5h-5z" fill="#fff" /></svg>;

const StatusBar = () => (
  <Status>
    <Listener>
      <ListenerInput $pink aria-label="Macro recorder" />
      <ListenerInput aria-label="Listener" defaultValue="Max to Physcs" />
    </Listener>
    <StatusRows>
      <StatusRow>
        <Well>1 Space Warp Selected</Well>
        <IconCell $w={26} aria-label="Lock"><svg width="10" height="14"><path d="M2.500 7V4a2.500 2.500 0 0 1 5 0v3" fill="none" stroke="#eee" strokeWidth="1.500" /><path d="M0 7h10v7H0z" fill="#f0d9b0" /><path d="M4.500 9v3" stroke="#333" strokeWidth="1.500" /></svg></IconCell>
        <IconCell $w={30} aria-label="Absolute"><svg width="14" height="14"><path d="M0 0h14v14H0z" fill="#e6e6e6" /><circle cx="7" cy="7" r="3" fill="none" stroke="#222" strokeWidth="1.500" /><path d="M7 0v4M7 10v4M0 7h4M10 7h4" stroke="#222" /></svg></IconCell>
        {[["X:", "142.965'"], ["Y:", "14.109'"], ["Z:", "30.772'"]].map(([axis, v]) => (
          <Coord key={axis}><span>{axis}</span><TextField $w={58} $h={21} defaultValue={v} /><SpinArrows h={17} name={axis} /></Coord>
        ))}
        <Well $w={100}>Grid = 50.0'</Well>
        <Pad $w={116} />
        <Combo label="Key set" options={[""]} w={100} h={21} />
      </StatusRow>
      <StatusRow>
        <Well>Click and drag to select and move objects</Well>
        <IconCell $w={28} aria-label="Isolate"><svg width="13" height="13" fill="#fff" stroke="#111"><path d="M1.500 3.500l2-2h8v8l-2 2h-8z" /><path d="M3.500 3.500h6v6h-6z" /></svg></IconCell>
        <Well $w={100}>Add Time Tag</Well>
        <Pad $w={116} />
        <PushButton $w={100} $h={21}>Key Filters...</PushButton>
      </StatusRow>
    </StatusRows>
    <PlayRows>
      <StatusRow>
        <IconCell $w={24} aria-label="Go to start"><Bars d="M1.500 1v12M9 2.500v9L4 7zM15 2.500v9L10 7zM16.500 2v10" /></IconCell>
        <IconCell $w={24} aria-label="Previous frame"><Bars d="M7 2v10L1 7zM9.500 2v10M12.500 2v10M15.500 2v10" /></IconCell>
        <IconCell $w={24} aria-label="Play"><Bars d="M5 1.500v11l8-5.500z" /></IconCell>
        <IconCell $w={24} aria-label="Next frame"><Bars d="M11 2v10l6-5zM2.500 2v10M5.500 2v10M8.500 2v10" /></IconCell>
        <IconCell $w={26} aria-label="Go to end"><Bars d="M16.500 1v12M9 2.500v9L14 7zM3 2.500v9L8 7zM1.500 2v10" /></IconCell>
        <Pad $w={5} />
        <IconCell $w={24} aria-label="Zoom"><ZoomGlass /></IconCell>
        <IconCell $w={23} aria-label="Zoom all"><FourView /></IconCell>
        <IconCell $w={24} aria-label="Zoom extents"><GreenFrame /></IconCell>
        <IconCell $w={24} aria-label="Zoom extents all"><GreenGrid /></IconCell>
      </StatusRow>
      <StatusRow>
        <IconCell $w={24} aria-label="Key mode"><Bars d="M1.500 2v10M7.500 3.500v7L3 7zM10.500 3.500v7L15 7zM16.500 2v10" /></IconCell>
        <Pad $w={4} />
        <TextField $w={62} $h={20} aria-label="Current frame" defaultValue="0" />
        <SpinArrows h={17} name="Frame" />
        <IconCell $w={30} aria-label="Time configuration"><svg width="16" height="16"><path d="M1 1h11v13H1z" fill="#dde6ee" /><path d="M2 2h5v6H2z" fill="#1d68b8" /><circle cx="11" cy="11" r="4" fill="#eee" stroke="#444" /><path d="M11 9v2h2" fill="none" stroke="#222" /></svg></IconCell>
        <IconCell $w={24} aria-label="Field of view"><svg width="18" height="16" fill="none" stroke="#ddd"><path d="M2 1l13 7-13 7M4 3c2 3 2 7 0 10" /><path d="M17 11v5h-5z" fill="#fff" stroke="none" /></svg></IconCell>
        <IconCell $w={23} aria-label="Walk"><svg width="16" height="16" fill="#eee"><ellipse cx="4" cy="6" rx="2.500" ry="4.500" /><circle cx="5" cy="13" r="2" /><ellipse cx="11" cy="4.500" rx="2.500" ry="4" /><circle cx="11" cy="11" r="2" /></svg></IconCell>
        <IconCell $w={24} aria-label="Orbit"><svg width="18" height="16"><circle cx="8" cy="8" r="6" fill="none" stroke="#ccc" strokeDasharray="6 3" /><path d="M5 5h6v6H5z" fill="#6fae5d" /><path d="M17 11v5h-5z" fill="#fff" /></svg></IconCell>
        <IconCell $w={24} aria-label="Maximize viewport"><svg width="16" height="16"><path d="M1 1h9v9H1z" fill="#e6e6e6" /><path d="M3 3l9 9M3 7V3h4" fill="none" stroke="#222" /><path d="M14 6v8H6" fill="none" stroke="#ddd" /></svg></IconCell>
      </StatusRow>
    </PlayRows>
  </Status>
);

export default function App() {
  return (
    <Shell>
      <Global />
      <MainToolbar />
      <Ribbon>
        <Grip $h={34} />
        <RibbonBody>
          <TabRow>
            <Tab $w={173} $active>Graphite Modeling Tools</Tab>
            <Tab $w={94}>Freeform</Tab>
            <Tab $w={90}>Selection</Tab>
            <Tab $w={112}>Object Paint</Tab>
          </TabRow>
          <PanelRow><PanelTab>Polygon Modeling</PanelTab></PanelRow>
        </RibbonBody>
      </Ribbon>
      <Viewport>
        <ViewLabel>[ + ] [ Perspective ] [ Wireframe ]</ViewLabel>
        <SafeFrame />
        <SceneDrawing />
      </Viewport>
      <Lower>
        <div>
          <SliderRow>
            <PushButton $w={16} $h={18}>&lt;</PushButton>
            <PushButton $w={123} $h={18}>0 / 200</PushButton>
            <PushButton $w={16} $h={18}>&gt;</PushButton>
          </SliderRow>
          <TrackRow>
            <TrackIcon>
              <svg width="18" height="16" fill="none" stroke="#ccc"><path d="M.5.5h17v4H.5zM2 3c3-3 5 2 7 0s4 1 6-1M.5 13.500h17v2H.5zM4.500 12V6.500M2.500 8.500l2-2 2 2M13.500 6v5.500M11.500 9.500l2 2 2-2" /></svg>
            </TrackIcon>
            <Track>
              {Array.from({ length: 21 }, (_, i) => (
                <Decade key={i}>
                  <Ticks />
                  <FrameNo $now={i === 0}>{i * 10}</FrameNo>
                </Decade>
              ))}
            </Track>
          </TrackRow>
        </div>
        <SideCell><SidePanelTail /></SideCell>
      </Lower>
      <StatusBar />
      <ThinkingWindow />
      <Menu x={673} y={305} w={203} items={rootMenu} />
      <Menu x={870} y={371} w={137} items={helperMenu} />
      <Menu x={1001} y={297} w={166} items={standardMenu} open />
    </Shell>
  );
}
